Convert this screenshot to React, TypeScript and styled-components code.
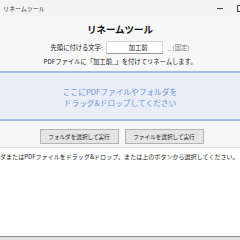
import styled, { createGlobalStyle } from "styled-components";

const Global = createGlobalStyle`
  html, body {
    margin: 0;
    padding: 0;
    width: 240px;
    height: 240px;
    overflow: hidden;
    background: #f7f7f7;
  }
  * { box-sizing: border-box; }
`;

const Window = styled.div`
  width: 240px;
  height: 240px;
  display: flex;
  flex-direction: column;
  overflow: hidden;
  background: #f7f7f7;
  font-family: "Noto Sans CJK JP", "Noto Sans", sans-serif;
  color: #222;
`;

const TitleBar = styled.div`
  height: 16px;
  flex: none;
  display: flex;
  align-items: center;
  justify-content: space-between;
  background: #f3f3f3;
  font-size: 6px;
  color: #333;
  padding-left: 3px;
`;

const TitleText = styled.span`
  white-space: nowrap;
`;

const Controls = styled.div`
  display: flex;
  align-items: center;
  gap: 14px;
  margin-right: -4px;
`;

const MinBtn = styled.span`
  width: 6px;
  height: 1px;
  background: #444;
`;

const MaxBtn = styled.span`
  width: 7px;
  height: 7px;
  border: 1px solid #444;
`;

const Main = styled.div`
  display: flex;
  flex-direction: column;
  align-items: center;
  padding-top: 6px;
`;

const Heading = styled.h1`
  margin: 0;
  font-size: 9.5px;
  font-weight: 700;
  line-height: 14px;
  color: #111;
`;

const PrefixRow = styled.div`
  margin-top: 5px;
  display: flex;
  align-items: center;
  gap: 3px;
  font-size: 6.3px;
`;

const PrefixInput = styled.div`
  width: 57px;
  height: 13px;
  background: #fff;
  border: 1px solid #d6d6d6;
  border-bottom-color: #9a9a9a;
  display: flex;
  align-items: center;
  padding-left: 22px;
  font-size: 6.3px;
`;

const Fixed = styled.span`
  color: #777;
  margin-left: 2px;
`;

const Note = styled.p`
  margin: 3px 0 0;
  font-size: 6.3px;
  line-height: 10px;
  white-space: nowrap;
`;

const DropZone = styled.div`
  align-self: stretch;
  margin-top: 4px;
  height: 50px;
  background: #e8edf6;
  border-top: 2px solid #a6bbe2;
  border-bottom: 2px solid #a6bbe2;
  display: flex;
  flex-direction: column;
  align-items: center;
  justify-content: center;
  color: #6f93d3;
  font-size: 7.7px;
  line-height: 10.5px;
  padding-top: 3px;
`;

const ButtonRow = styled.div`
  margin-top: 8px;
  display: flex;
  gap: 6px;
  margin-left: 3px;
`;

const Button = styled.button`
  width: 79px;
  height: 15px;
  padding: 0;
  background: #e4e4e4;
  border: 1px solid #b4b4b4;
  font-family: inherit;
  font-size: 5.6px;
  color: #222;
  border-radius: 0;
`;

const Log = styled.div`
  margin-top: 3px;
  flex: 1;
  background: #fff;
  border-top: 1px solid #dcdcdc;
  padding-top: 4px;
  font-size: 6.05px;
  line-height: 9px;
  white-space: nowrap;
  overflow: hidden;
`;

const StatusBar = styled.div`
  height: 4px;
  flex: none;
  background: #e2e2e2;
  border-top: 1px solid #8a8a8a;
`;

export default function App() {
  return (
    <>
      <Global />
      <Window>
        <TitleBar>
          <TitleText>リネームツール</TitleText>
          <Controls>
            <MinBtn />
            <MaxBtn />
          </Controls>
        </TitleBar>
        <Main>
          <Heading>リネームツール</Heading>
          <PrefixRow>
            <span>先頭に付ける文字:</span>
            <PrefixInput>加工前</PrefixInput>
            <Fixed>_ (固定)</Fixed>
          </PrefixRow>
          <Note>PDFファイルに「加工前_」を付けてリネームします。</Note>
          <DropZone>
            <div>ここにPDFファイルやフォルダを</div>
            <div>ドラッグ&amp;ドロップしてください</div>
          </DropZone>
          <ButtonRow>
            <Button>フォルダを選択して実行</Button>
            <Button>ファイルを選択して実行</Button>
          </ButtonRow>
        </Main>
        <Log>ダまたはPDFファイルをドラッグ&amp;ドロップ、または上のボタンから選択してください。</Log>
        <StatusBar />
      </Window>
    </>
  );
}
